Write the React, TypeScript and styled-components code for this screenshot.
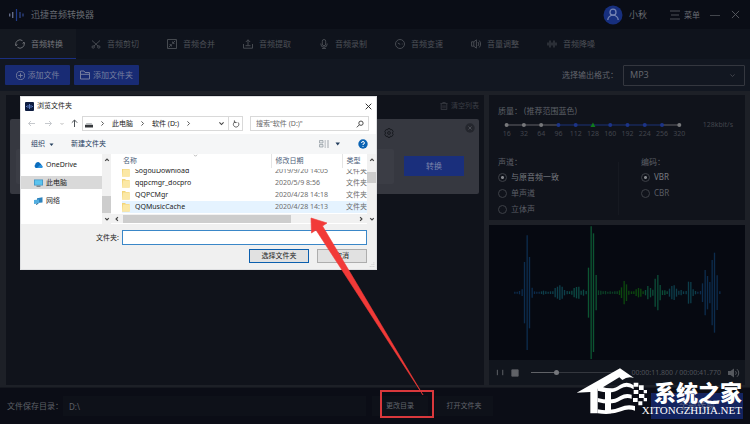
import React from "react";
import styled, { createGlobalStyle, css } from "styled-components";

const GlobalStyle = createGlobalStyle`
  * { box-sizing: border-box; }
  body {
    margin: 0;
    background: #0b0d16;
    font-family: "Noto Sans", "Noto Sans CJK SC", sans-serif;
    font-size: 8px;
    line-height: 12px;
    color: #5d6067;
  }
  button, input, select { font: inherit; color: inherit; margin: 0; padding: 0; border: 0; background: none; }
  svg { display: block; flex: none; }
`;

const Page = styled.div`
  position: relative;
  min-height: 100vh;
  display: flex;
  flex-direction: column;
  overflow: hidden;
`;

const TitleBar = styled.header`
  display: flex;
  align-items: center;
  height: 29px;
  padding: 0 10px 0 9px;
  background: #0a0d16;
`;

const AppName = styled.h1`
  flex: 1;
  margin: 0 0 0 7px;
  font-size: 9px;
  font-weight: 400;
  color: #676a71;
`;

const User = styled.span`
  display: flex;
  align-items: center;
  gap: 6px;
  margin-right: 23px;
  font-size: 9px;
  color: #686b72;
`;

const PlainButton = styled.button<{ $right?: number }>`
  display: flex;
  align-items: center;
  gap: 4px;
  margin-right: ${(p) => p.$right ?? 0}px;
  color: #676a71;
`;

const Tabs = styled.nav`
  display: flex;
  height: 30px;
  background: #0f131c;
`;

const Tab = styled.button<{ $active?: boolean }>`
  display: flex;
  align-items: center;
  gap: 6px;
  width: 76px;
  padding-left: 15px;
  border-bottom: 1px solid transparent;
  color: #4d5057;
  ${(p) =>
    p.$active &&
    css`
      background: #141820;
      border-color: #1b2f80;
      color: #74767b;
    `}
`;

const Toolbar = styled.div`
  display: flex;
  align-items: center;
  gap: 4px;
  height: 32px;
  padding: 0 5px;
  background: #121721;
`;

const AddButton = styled.button`
  display: flex;
  align-items: center;
  justify-content: center;
  gap: 3px;
  width: 65px;
  height: 20px;
  border-radius: 1px;
  background: #182b74;
  color: #777f9f;
`;

const FormatLabel = styled.label`
  display: flex;
  align-items: center;
  gap: 5px;
  margin-left: auto;
  color: #62656c;
`;

const SelectBox = styled.span`
  display: flex;
  align-items: center;
  width: 122px;
  height: 21px;
  padding-right: 8px;
  border: 1px solid #34373f;
  border-radius: 1px;
`;

const Select = styled.select`
  flex: 1;
  height: 100%;
  padding-left: 6px;
  appearance: none;
  outline: none;
  font-size: 9px;
`;

const Main = styled.main`
  flex: 1;
  display: grid;
  grid-template-columns: 1fr 256px;
  gap: 5px;
  padding: 4px 5px 2px 6px;
  background: #1d2027;
`;

const FilePanel = styled.section`
  padding: 5px 5px 0 4px;
  background: #10131b;
`;

const PanelHead = styled.div`
  display: flex;
  justify-content: flex-end;
  height: 19px;
`;

const ClearButton = styled.button`
  display: flex;
  align-items: center;
  gap: 3px;
  height: 12px;
  font-size: 7px;
  color: #3b3e45;
`;

const FileCard = styled.article`
  display: flex;
  align-items: flex-end;
  gap: 10px;
  height: 75px;
  padding: 4px 4px 0 6px;
  border-radius: 2px;
  background: #363840;
`;

const FileInfo = styled.div`
  flex: 1;
  align-self: stretch;
  display: flex;
  flex-direction: column;
  align-items: flex-end;
  gap: 11px;
  padding-top: 5px;
`;

const FileStrip = styled.div`
  width: 100%;
  height: 35px;
  border-radius: 2px;
  background: #3b3d45;
`;

const CardActions = styled.div`
  display: flex;
  flex-direction: column;
  align-self: stretch;
  gap: 23px;
  width: 71px;
`;

const ConvertButton = styled.button`
  width: 60px;
  height: 20px;
  background: #1a2f7c;
  color: #7b84aa;
`;

const EndButton = styled.button`
  align-self: flex-end;
`;

const Side = styled.aside`
  display: flex;
  flex-direction: column;
  gap: 5px;
`;

const Settings = styled.section`
  height: 125px;
  padding: 10px 8px 0 9px;
  background: #10131b;
`;

const QualityRow = styled.div`
  display: flex;
  justify-content: space-between;
  margin: 2px 4px 0 0;
  font-size: 7px;
  color: #42454d;
`;

const QualityScale = styled.div`
  position: relative;
  width: 190px;
`;

const HiddenRange = styled.input`
  position: absolute;
  inset: 0;
  width: 100%;
  height: 12px;
  opacity: 0;
`;

const Ticks = styled.div`
  display: grid;
  grid-template-columns: repeat(11, 1fr);
  margin-top: -2px;
  text-align: center;
  line-height: 10px;
`;

const OptionColumns = styled.div`
  display: grid;
  grid-template-columns: 121px 1fr;
  gap: 22px;
  margin-top: 17px;
`;

const OptionGroup = styled.fieldset<{ $divided?: boolean }>`
  display: flex;
  flex-direction: column;
  gap: 4px;
  margin: 0;
  padding: 0;
  border: 0;
  border-right: ${(p) => (p.$divided ? "1px solid #161921" : "0")};
  legend { padding: 0; margin-bottom: 3px; color: #5c5f66; }
`;

const RadioLabel = styled.label`
  display: flex;
  align-items: center;
  gap: 4px;
  color: #5a5d64;
  &:has(input:checked) { color: #777a80; }
`;

const Radio = styled.input`
  appearance: none;
  width: 9px;
  height: 9px;
  border: 1px solid #3d4047;
  border-radius: 50%;
  &:checked { background: radial-gradient(circle, #85878c 0 1px, transparent 2px); }
`;

const Monitor = styled.section`
  display: flex;
  flex-direction: column;
  background: #11151d;
`;

const WaveBox = styled.div`
  height: 135px;
  background: #060911;
`;

const Player = styled.div`
  display: flex;
  align-items: center;
  height: 25px;
  padding: 0 5px 0 7px;
  font-size: 7px;
  color: #50535a;
`;

const Seek = styled.input`
  appearance: none;
  flex: 1;
  min-width: 0;
  height: 7px;
  margin: 0 8px 0 12px;
  background: linear-gradient(90deg, #606267 0 26%, #34373e 26%) center / 100% 1px no-repeat;
  &::-webkit-slider-thumb {
    appearance: none;
    width: 5px;
    height: 5px;
    border-radius: 50%;
    background: #75777c;
  }
`;

const Speaker = styled.button`
  margin-left: 7px;
`;

const Footer = styled.footer`
  display: flex;
  align-items: center;
  height: 37px;
  padding: 0 7px;
  border-top: 1px solid #15181f;
  background: #0b0d16;
`;

const PathLabel = styled.label`
  flex: 1;
  display: flex;
  align-items: center;
`;

const PathInput = styled.input`
  flex: 1;
  height: 20px;
  padding-left: 6px;
  background: #0e1119;
`;

const FooterButton = styled.button<{ $width: number; $gap: number }>`
  width: ${(p) => p.$width}px;
  height: 20px;
  margin-left: ${(p) => p.$gap}px;
  background: #0e1119;
  font-size: 7px;
  color: #61646b;
`;

const ConvertAll = styled.button`
  width: 92px;
  height: 26px;
  margin-left: 158px;
  background: #13235f;
  font-size: 9px;
  color: #58617f;
`;

const Dialog = styled.section`
  position: absolute;
  left: 20px;
  top: 96px;
  width: 357px;
  border: 1px solid #dfe0e2;
  background: #fff;
  font-size: 7px;
  color: #1c1c1c;
`;

const DialogTitle = styled.header`
  display: flex;
  align-items: center;
  gap: 3px;
  height: 18px;
  padding: 0 4px;
  h2 { flex: 1; margin: 0; font-size: 7px; font-weight: 400; }
`;

const AddressRow = styled.div`
  display: flex;
  align-items: center;
  height: 19px;
  padding: 0 7px 2px 6px;
`;

const Crumbs = styled.div`
  display: flex;
  align-items: center;
  gap: 6px;
  width: 163px;
  height: 15px;
  margin-right: 7px;
  padding-left: 2px;
  border: 1px solid #d9d9d9;
`;

const CrumbEnd = styled.span`
  display: flex;
  align-items: center;
  align-self: stretch;
  gap: 3px;
  margin-left: auto;
  padding-right: 2px;
`;

const Divider = styled.span`
  width: 1px;
  height: 100%;
  background: #d9d9d9;
`;

const SearchBox = styled.label`
  flex: 1;
  display: flex;
  align-items: center;
  height: 15px;
  padding: 0 4px 0 5px;
  border: 1px solid #d9d9d9;
  input { flex: 1; min-width: 0; outline: none; }
  input::placeholder { color: #6b6b6b; opacity: 1; }
`;

const CommandBar = styled.div`
  display: flex;
  align-items: center;
  gap: 17px;
  height: 20px;
  padding: 0 8px 0 10px;
  background: #f5f6f7;
  color: #26405f;
`;

const CommandButton = styled.button<{ $push?: boolean }>`
  display: flex;
  align-items: center;
  gap: 4px;
  margin-left: ${(p) => (p.$push ? "auto" : 0)};
`;

const Browser = styled.div`
  display: grid;
  grid-template-columns: 81px 9px 1fr 9px;
  height: 70px;
`;

const NavList = styled.ul`
  display: flex;
  flex-direction: column;
  gap: 5px;
  margin: 0;
  padding: 4px 0 0;
  list-style: none;
`;

const NavItem = styled.li<{ $selected?: boolean }>`
  display: flex;
  align-items: center;
  gap: 3px;
  height: 13px;
  padding-left: 13px;
  background: ${(p) => (p.$selected ? "#d9d9d9" : "transparent")};
`;

const ScrollBar = styled.div`
  display: flex;
  flex-direction: column;
  align-items: center;
  padding: 3px 0 2px;
  background: #f1f1f1;
`;

const ScrollThumb = styled.div<{ $top: number; $height: number }>`
  width: 100%;
  height: ${(p) => p.$height}px;
  margin: ${(p) => p.$top}px 0 auto;
  background: #cdcdcd;
`;

const FileArea = styled.div`
  position: relative;
  min-width: 0;
`;

const SortMark = styled.span`
  position: absolute;
  left: 82px;
  top: -1px;
`;

const FileTable = styled.table`
  width: 100%;
  table-layout: fixed;
  border-collapse: collapse;
  th, td { padding: 0 0 0 4px; font-weight: 400; text-align: left; white-space: nowrap; overflow: hidden; }
  th { height: 14px; color: #4c607a; border-left: 1px solid #e5e5e5; }
  th:first-child { padding-left: 12px; border-left: 0; }
  td { height: 12px; color: #6d6d6d; }
  td:first-child { padding-left: 11px; color: #1c1c1c; }
`;

const ColName = styled.col`width: 160px;`;
const ColDate = styled.col`width: 71px;`;

const FileRow = styled.tr<{ $active?: boolean; $cut?: boolean }>`
  background: ${(p) => (p.$active ? "linear-gradient(90deg, #fff 0 11px, #e5f3ff 11px)" : "transparent")};
  td { height: ${(p) => (p.$cut ? 9 : 12)}px; }
`;

const CellBody = styled.div<{ $cut?: boolean }>`
  display: flex;
  align-items: ${(p) => (p.$cut ? "flex-end" : "center")};
  gap: 5px;
  height: ${(p) => (p.$cut ? 8 : 12)}px;
  overflow: hidden;
`;

const HScroll = styled.div`
  display: flex;
  align-items: center;
  gap: 3px;
  height: 9px;
  margin-top: 1px;
  padding: 0 3px;
  background: #f1f1f1;
  svg:last-child { margin-left: auto; }
`;

const HThumb = styled.div`
  width: 168px;
  height: 8px;
  background: #cdcdcd;
`;

const DialogFoot = styled.div`
  position: relative;
  display: flex;
  flex-direction: column;
  align-items: flex-end;
  gap: 4px;
  padding: 6px 9px 6px 0;
  background: #f0f0f0;
`;

const Grip = styled.span`
  position: absolute;
  right: 1px;
  bottom: 1px;
`;

const NameLabel = styled.label`
  display: flex;
  align-items: center;
  gap: 3px;
  input { width: 245px; height: 15px; padding: 0 4px; border: 1px solid #3a87c8; background: #fff; outline: none; }
`;

const DialogButtons = styled.div`
  display: flex;
  gap: 8px;
`;

const DialogButton = styled.button<{ $primary?: boolean }>`
  width: ${(p) => (p.$primary ? 60 : 50)}px;
  height: 14px;
  line-height: 10px;
  background: #e1e1e1;
  border: 1px solid ${(p) => (p.$primary ? "#0b5fae" : "#adadad")};
`;

const Annotation = styled.svg`
  position: absolute;
  left: 300px;
  top: 210px;
  pointer-events: none;
`;

const Watermark = styled.div`
  position: absolute;
  right: 8px;
  bottom: 8px;
  display: flex;
  align-items: flex-end;
  color: #fff;
  pointer-events: none;
`;

const WatermarkText = styled.div`
  display: flex;
  flex-direction: column;
  align-items: flex-end;
  margin-left: -7px;
  strong { font: 900 22px/28px "Noto Sans CJK SC", sans-serif; }
  span { font: 11px/11px "Liberation Serif", serif; }
`;

type Glyph = { d: string; size?: number; color?: string; width?: number; fill?: string };
const Icon = ({ d, size = 10, color = "currentColor", width = 1, fill = "none" }: Glyph) => (
  <svg width={size} height={size} viewBox="0 0 10 10" fill={fill} stroke={color} strokeWidth={width} aria-hidden>
    <path d={d} />
  </svg>
);

const chevronDown = "M2 3.5L5 6.5L8 3.5";
const chevronUp = "M2 6.5L5 3.5L8 6.5";
const chevronRight = "M3.5 2L6.5 5L3.5 8";
const chevronLeft = "M6.5 2L3.5 5L6.5 8";
const cross = "M1 1L9 9M9 1L1 9";

const tabs = [
  { label: "音频转换", d: "M1 6.5A4.2 4.2 0 0 1 7.5 1.7M9 3.5A4.2 4.2 0 0 1 2.5 8.3M.2 5.2L1 6.8L2.4 5.6M9.8 4.8L9 3.2L7.6 4.4" },
  { label: "音频剪切", d: "M1 1.5L7.2 7.2M9 1.5L2.8 7.2M1 8a1.2 1.2 0 1 0 2.4 0a1.2 1.2 0 1 0-2.4 0M6.6 8a1.2 1.2 0 1 0 2.4 0a1.2 1.2 0 1 0-2.4 0" },
  { label: "音频合并", d: "M.5 .5H9.5V9.5H.5ZM8.2 1.8L5.8 4.2M5.6 2.5V4.4H7.5M1.8 8.2L4.2 5.8M2.5 5.6H4.4V7.5" },
  { label: "音频提取", d: "M.5 5V9.2H9.5V5M2.5 6.7H7.5M5 6.5V.8M2.8 3L5 .8L7.2 3" },
  { label: "音频录制", d: "M3.3 2.2a1.7 1.7 0 0 1 3.4 0V5a1.7 1.7 0 0 1-3.4 0ZM1.8 4.5V5a3.2 3.2 0 0 0 6.4 0V4.5M5 8.2V9.6M3 9.6H7" },
  { label: "音频变速", d: "M.5 5a4.5 4.5 0 1 0 9 0a4.5 4.5 0 1 0-9 0M5.2 5.4L2.8 4M6.8 5H7.6" },
  { label: "音量调整", d: "M.6 2.8H2.8V7.2H.6ZM2.8 2.8L5.4 .8V9.2L2.8 7.2M7 3A3 3 0 0 1 7 7M8.2 1.5A5 5 0 0 1 8.2 8.5" },
  { label: "音频降噪", d: "M1 3.5V6.5M3 1.5V8.5M5 3.5V6.5M7 1.5V8.5M9 3.5V6.5" },
];

const bitrates = [16, 32, 64, 96, 112, 128, 160, 192, 224, 256, 320];

const QualityTrack = () => (
  <svg width="190" height="12" viewBox="0 0 190 12" aria-hidden>
    <path d="M9 6H60M164 6H181" stroke="#626368" strokeWidth="1" />
    <path d="M60 6H164" stroke="#1b3279" strokeWidth="1" />
    {bitrates.map((rate, i) => {
      const x = 8.6 + i * 17.27;
      if (rate === 128) return <path key={rate} d={`M${x - 2.5} 8L${x} 3.5L${x + 2.5} 8Z`} fill="#107a1d" />;
      const blue = i > 2 && i < 10;
      return <circle key={rate} cx={x} cy="6" r="2" fill={blue ? "#1c3488" : "#77787b"} />;
    })}
  </svg>
);

/* Each entry: x, half height of the bar */
const peaks: [number, number][] = [
  [76, 3], [83, 3], [90, 5], [98, 10], [105, 92], [113, 172], [120, 107], [128, 15], [135, 4], [142, 3], [149, 3], [156, 4],
  [162, 6], [169, 4], [176, 3], [183, 4], [190, 4], [197, 14], [204, 18], [211, 22], [218, 18], [225, 8], [233, 5], [240, 4],
  [247, 6], [254, 14], [261, 17], [268, 18], [275, 6], [282, 9], [290, 5], [297, 75], [305, 199], [312, 178], [320, 53],
  [327, 7], [334, 6], [341, 4], [348, 5], [355, 3], [362, 4], [369, 3], [376, 4], [383, 4], [390, 7], [396, 16], [404, 35],
  [411, 25], [418, 6], [426, 4], [433, 4], [440, 10], [447, 14], [454, 12], [461, 4], [468, 8], [475, 20], [483, 14],
  [490, 9], [497, 42], [505, 53], [512, 23], [519, 7], [526, 7], [533, 4], [540, 12], [547, 20], [554, 22], [561, 12],
  [568, 6], [575, 8], [582, 4], [590, 5], [597, 33], [604, 32], [611, 10], [618, 5], [625, 3], [633, 5], [639, 28],
  [647, 68], [654, 50], [661, 32], [668, 98], [675, 120], [683, 52], [691, 4],
];

const peakColor = (x: number) => {
  if (x < 150 || x > 620) return "#0c2c4d";
  if (x < 235) return "#0d3f4b";
  if (x < 292) return "#0b4a44";
  if (x < 325) return "#0c5532";
  if (x < 390) return "#0b4026";
  if (x < 462) return "#0c480f";
  if (x < 535) return "#0b4c38";
  return "#0d3d4a";
};

const Waveform = () => (
  <svg width="100%" height="135" viewBox="0 0 765 405" role="img" aria-label="waveform">
    {peaks.map(([x, h]) => (
      <path key={x} d={`M${x} ${203 - h}V${203 + h}`} stroke={peakColor(x)} strokeWidth="4" />
    ))}
  </svg>
);

const Folder = () => (
  <svg width="8" height="10" viewBox="0 0 8 10" aria-hidden>
    <path d="M0 1H3L4 2H7.5V9.5H0Z" fill="#f2d479" />
    <path d="M1 2.5H8V9.5H0Z" fill="#fbe8a6" />
  </svg>
);

const files = [
  ["SogouDownload", "2019/9/20 14:05"],
  ["qqpcmgr_docpro", "2020/5/9 8:56"],
  ["QQPCMgr", "2020/4/28 14:18"],
  ["QQMusicCache", "2020/4/28 14:13"],
];

const FolderDialog = () => (
  <Dialog role="dialog" aria-label="浏览文件夹">
    <DialogTitle>
      <svg width="9" height="9" viewBox="0 0 9 9" aria-hidden>
        <rect width="9" height="9" rx="1" fill="#0d1c40" />
        <path d="M1.5 4V5M3 3V6M4.5 2V7M6 3V6M7.5 4V5" stroke="#6e93dd" strokeWidth=".8" />
      </svg>
      <h2>浏览文件夹</h2>
      <button aria-label="关闭"><Icon d={cross} size={7} color="#222" width={1.3} /></button>
    </DialogTitle>
    <AddressRow>
      <svg width="55" height="11" viewBox="0 0 55 11" fill="none" aria-hidden>
        <path d="M8 5.5H1.5M4 3L1.5 5.5L4 8M18 5.5H24.5M22 3L24.5 5.5L22 8" stroke="#c6c9cd" />
        <path d="M33.5 5L35 6.5L36.5 5" stroke="#bbb" />
        <path d="M47.5 9V2M44.8 4.7L47.5 2L50.2 4.7" stroke="#4d5257" />
      </svg>
      <Crumbs>
        <svg width="8" height="8" viewBox="0 0 8 8" aria-hidden>
          <path d="M1.5 3H6.5L8 5H0Z" fill="#b8bbbd" />
          <path d="M0 5H8V7.5H0Z" fill="#36393c" />
        </svg>
        <Icon d={chevronRight} size={7} color="#555" width={1.4} />
        <span>此电脑</span>
        <Icon d={chevronRight} size={7} color="#555" width={1.4} />
        <span>软件 (D:)</span>
        <Icon d={chevronRight} size={7} color="#555" width={1.4} />
        <CrumbEnd>
          <Icon d={chevronDown} size={7} color="#444" width={1.6} />
          <Divider />
          <Icon d="M7.5 3A3.4 3.4 0 1 1 4 2.2M3 .5V3.2H5.8" size={8} color="#555" width={1.2} />
        </CrumbEnd>
      </Crumbs>
      <SearchBox>
        <input aria-label="搜索" placeholder={'搜索"软件 (D:)"'} />
        <Icon d="M3.5 4a2.7 2.7 0 1 0 5.4 0a2.7 2.7 0 1 0-5.4 0M4.2 6L1 9.2" size={8} color="#444" width={1.2} />
      </SearchBox>
    </AddressRow>
    <CommandBar>
      <CommandButton>
        组织
        <Icon d="M1 3H9L5 8Z" size={5} color="none" fill="#26405f" />
      </CommandButton>
      <CommandButton>新建文件夹</CommandButton>
      <CommandButton $push aria-label="更改视图">
        <svg width="22" height="8" viewBox="0 0 22 8" aria-hidden>
          <path d="M.5 .5H4V3H.5ZM.5 4.5H4V7H.5Z" fill="#e3e6e8" stroke="#8e969d" strokeWidth=".7" />
          <path d="M5.5 1H7M8 1H10M5.5 3H7M8 3H10M5.5 5H7M8 5H10M5.5 7H7M8 7H10" stroke="#8e969d" strokeWidth=".8" />
          <path d="M16.5 2.5H21L18.7 5.5Z" fill="#26405f" />
        </svg>
      </CommandButton>
      <CommandButton aria-label="帮助">
        <svg width="10" height="10" viewBox="0 0 10 10" aria-hidden>
          <circle cx="5" cy="5" r="4.7" fill="#0a63b4" />
          <path d="M3.6 4A1.4 1.4 0 1 1 5 5.3V6" fill="none" stroke="#fff" />
          <circle cx="5" cy="7.5" r=".6" fill="#fff" />
        </svg>
      </CommandButton>
    </CommandBar>
    <Browser>
      <NavList>
        <NavItem>
          <svg width="9" height="8" viewBox="0 0 9 8" aria-hidden>
            <path d="M2 7A2 2 0 0 1 1.3 3.6A2.6 2.6 0 0 1 6 2.2A2.3 2.3 0 0 1 7.5 4.2A1.5 1.5 0 0 1 7.5 7Z" fill="#0b6cbd" />
            <path d="M3 7L6 4A1.8 1.8 0 0 1 8 5A1.1 1.1 0 0 1 8 7Z" fill="#2b93e0" />
          </svg>
          OneDrive
        </NavItem>
        <NavItem $selected>
          <svg width="9" height="8" viewBox="0 0 9 8" aria-hidden>
            <path d="M0 .5H9V6.5H0Z" fill="#3b8fc0" />
            <path d="M.7 1.2H8.3V5.8H.7Z" fill="#5cc4ee" />
            <path d="M2.5 7.2H6.5" stroke="#5b6870" />
          </svg>
          此电脑
        </NavItem>
        <NavItem>
          <svg width="9" height="8" viewBox="0 0 9 8" aria-hidden>
            <path d="M3 1.2L8.5 .2V5.5L3 6Z" fill="#2d83bd" />
            <path d="M0 3L5 2.5V6.5L0 7Z" fill="#52aee0" />
            <path d="M2 7.5L4 6.5" stroke="#35668a" />
          </svg>
          网络
        </NavItem>
      </NavList>
      <ScrollBar>
        <Icon d={chevronUp} size={6} color="#444" width={2} />
        <ScrollThumb $top={33} $height={17} />
        <Icon d={chevronDown} size={6} color="#444" width={2} />
      </ScrollBar>
      <FileArea>
        <SortMark><Icon d={chevronDown} size={5} color="#999" width={1.4} /></SortMark>
        <FileTable>
          <colgroup><ColName /><ColDate /><col /></colgroup>
          <thead><tr><th>名称</th><th>修改日期</th><th>类型</th></tr></thead>
          <tbody>
            {files.map(([name, date], i) => (
              <FileRow key={name} $cut={i === 0} $active={i === 3}>
                <td><CellBody $cut={i === 0}><Folder />{name}</CellBody></td>
                <td><CellBody $cut={i === 0}>{date}</CellBody></td>
                <td><CellBody $cut={i === 0}>文件夹</CellBody></td>
              </FileRow>
            ))}
          </tbody>
        </FileTable>
        <HScroll>
          <Icon d={chevronLeft} size={6} color="#444" width={2} />
          <HThumb />
          <Icon d={chevronRight} size={6} color="#444" width={2} />
        </HScroll>
      </FileArea>
      <ScrollBar>
        <Icon d={chevronUp} size={6} color="#444" width={2} />
        <ScrollThumb $top={9} $height={11} />
        <Icon d={chevronDown} size={6} color="#444" width={2} />
      </ScrollBar>
    </Browser>
    <DialogFoot>
      <NameLabel>文件夹:<input type="text" /></NameLabel>
      <DialogButtons>
        <DialogButton $primary>选择文件夹</DialogButton>
        <DialogButton>取消</DialogButton>
      </DialogButtons>
      <Grip><Icon d="M8 1V2M8 4V5M8 7V8M5 4V5M5 7V8M2 7V8" size={6} color="#b0b0b0" width={1.4} /></Grip>
    </DialogFoot>
  </Dialog>
);

export default function App() {
  return (
    <Page>
      <GlobalStyle />
      <TitleBar>
        <svg width="15" height="12" viewBox="0 0 15 12" aria-hidden>
          <path d="M.7 4.5V7.5M3.7 3V9" stroke="#626b87" strokeWidth="1.4" />
          <path d="M7.5 0V12" stroke="#1f3c8c" strokeWidth="1.2" />
          <path d="M11 3V9M14 4.5V7.5" stroke="#2b417f" strokeWidth="1.4" />
        </svg>
        <AppName>迅捷音频转换器</AppName>
        <User>
          <svg width="20" height="20" viewBox="0 0 20 20" fill="none" aria-hidden>
            <circle cx="10" cy="10" r="9.5" fill="#172f7e" />
            <circle cx="10" cy="7.2" r="3" stroke="#7483b3" strokeWidth="1.3" />
            <path d="M4.8 15A5.2 4.8 0 0 1 15.2 15" stroke="#7483b3" strokeWidth="1.3" />
          </svg>
          小秋
        </User>
        <PlainButton $right={10}>
          <Icon d="M0 1H10M1 5H9M0 9H10" color="#4d5057" />
          菜单
        </PlainButton>
        <PlainButton $right={11} aria-label="最小化"><Icon d="M0 5.5H10" color="#42454c" /></PlainButton>
        <PlainButton aria-label="关闭"><Icon d={cross} size={9} color="#5a5d64" /></PlainButton>
      </TitleBar>

      <Tabs>
        {tabs.map((t, i) => (
          <Tab key={t.label} $active={i === 0}>
            <Icon d={t.d} width={0.9} />
            {t.label}
          </Tab>
        ))}
      </Tabs>

      <Toolbar>
        <AddButton>
          <Icon d="M.5 5a4.5 4.5 0 1 0 9 0a4.5 4.5 0 1 0-9 0M2.5 5H7.5M5 2.5V7.5" size={9} />
          添加文件
        </AddButton>
        <AddButton>
          <Icon d="M.5 1H4L5 2.5H9.5V9H.5ZM.5 4.3H9.5" size={10} />
          添加文件夹
        </AddButton>
        <FormatLabel>
          选择输出格式：
          <SelectBox>
            <Select defaultValue="MP3"><option>MP3</option></Select>
            <Icon d={chevronDown} size={7} color="#45484f" width={1.3} />
          </SelectBox>
        </FormatLabel>
      </Toolbar>

      <Main>
        <FilePanel>
          <PanelHead>
            <ClearButton>
              <Icon d="M.5 2H9.5M3.5 2V.5H6.5V2M1.5 2V9.5H8.5V2M3.8 4V8M6.2 4V8" size={8} />
              清空列表
            </ClearButton>
          </PanelHead>
          <FileCard>
            <FileInfo>
              <PlainButton aria-label="设置">
                <Icon
                  d="M4 .6H6L6.5 1.9L7.9 1.5L9.2 3.5L8.4 5L9.2 6.5L7.9 8.5L6.5 8.1L6 9.4H4L3.5 8.1L2.1 8.5L.8 6.5L1.6 5L.8 3.5L2.1 1.5L3.5 1.9ZM3.6 5a1.4 1.4 0 1 0 2.8 0a1.4 1.4 0 1 0-2.8 0"
                  color="#15171d"
                  width={0.9}
                />
              </PlainButton>
              <FileStrip />
            </FileInfo>
            <CardActions>
              <EndButton aria-label="移除">
                <svg width="10" height="10" viewBox="0 0 10 10" aria-hidden>
                  <circle cx="5" cy="5" r="4.7" fill="#24262d" />
                  <path d="M3.4 3.4L6.6 6.6M6.6 3.4L3.4 6.6" stroke="#494b52" />
                </svg>
              </EndButton>
              <ConvertButton>转换</ConvertButton>
            </CardActions>
          </FileCard>
        </FilePanel>

        <Side>
          <Settings>
            <label htmlFor="quality">质量：&nbsp;(推荐范围蓝色)</label>
            <QualityRow>
              <QualityScale>
                <QualityTrack />
                <HiddenRange id="quality" type="range" min={0} max={10} defaultValue={5} />
                <Ticks>{bitrates.map((b) => <span key={b}>{b}</span>)}</Ticks>
              </QualityScale>
              <span>128kbit/s</span>
            </QualityRow>
            <OptionColumns>
              <OptionGroup $divided>
                <legend>声道：</legend>
                <RadioLabel><Radio type="radio" name="channel" defaultChecked />与原音频一致</RadioLabel>
                <RadioLabel><Radio type="radio" name="channel" />单声道</RadioLabel>
                <RadioLabel><Radio type="radio" name="channel" />立体声</RadioLabel>
              </OptionGroup>
              <OptionGroup>
                <legend>编码：</legend>
                <RadioLabel><Radio type="radio" name="codec" defaultChecked />VBR</RadioLabel>
                <RadioLabel><Radio type="radio" name="codec" />CBR</RadioLabel>
              </OptionGroup>
            </OptionColumns>
          </Settings>
          <Monitor>
            <WaveBox><Waveform /></WaveBox>
            <Player>
              <PlainButton $right={6} aria-label="暂停"><Icon d="M1.5 2V8M7.5 2V8" size={9} color="#5f6167" width={1.1} /></PlainButton>
              <PlainButton aria-label="停止"><Icon d="M1 1H9V9H1Z" size={8} color="#606267" fill="#606267" /></PlainButton>
              <Seek type="range" aria-label="播放进度" min={0} max={100} defaultValue={26} />
              <span>00:00:11.800 / 00:00:41.770</span>
              <Speaker aria-label="音量">
                <svg width="12" height="10" viewBox="0 0 12 10" aria-hidden>
                  <path d="M0 3H2.5L6 .5V9.5L2.5 7H0Z" fill="#55585e" />
                  <path d="M7.5 3.2A2.5 2.5 0 0 1 7.5 6.8M9 1.2A5 5 0 0 1 9 8.8" fill="none" stroke="#55585e" />
                </svg>
              </Speaker>
            </Player>
          </Monitor>
        </Side>
      </Main>

      <Footer>
        <PathLabel>
          文件保存目录：
          <PathInput defaultValue="D:\" />
        </PathLabel>
        <FooterButton $width={56} $gap={6}>更改目录</FooterButton>
        <FooterButton $width={58} $gap={7}>打开文件夹</FooterButton>
        <ConvertAll>全部转换</ConvertAll>
      </Footer>

      <FolderDialog />

      <Annotation width="140" height="212" viewBox="0 0 140 212" aria-hidden>
        <path d="M11 8L11.5 23L16 20L123 185L22.5 16L27 13Z" fill="#f23a38" stroke="#f23a38" strokeWidth=".6" />
        <rect x="81" y="181" width="52" height="26" fill="none" stroke="#d9383c" strokeWidth="2" />
      </Annotation>

      <Watermark>
        <svg width="74" height="50" viewBox="70 50 222 150" fill="#fff" aria-hidden>
          <path d="M75 130L205 57L247 86Q228 80 212 92L203 84L150 116L138 118L138 192H116V128Z" />
          <path d="M150 112Q185 124 206 106Q228 94 246 108V120Q228 106 206 118Q182 136 138 124V112Z" />
          <path d="M138 146Q182 158 206 140Q222 130 240 136V148Q224 142 208 152Q182 170 138 158Z" />
          <path d="M138 180Q176 188 206 174Q226 164 250 170V184Q228 176 208 186Q178 198 138 192Z" />
          <path d="M160 118H178V192H160ZM246 100H260V112H246ZM262 108H276V122H262ZM246 122H260V134H246ZM262 134H278V146H262ZM244 146H258V158H244ZM260 156H272V168H260ZM276 122H286V132H276ZM276 146H286V156H276Z" />
        </svg>
        <WatermarkText>
          <strong>系统之家</strong>
          <span>XITONGZHIJIA.NET</span>
        </WatermarkText>
      </Watermark>
    </Page>
  );
}
